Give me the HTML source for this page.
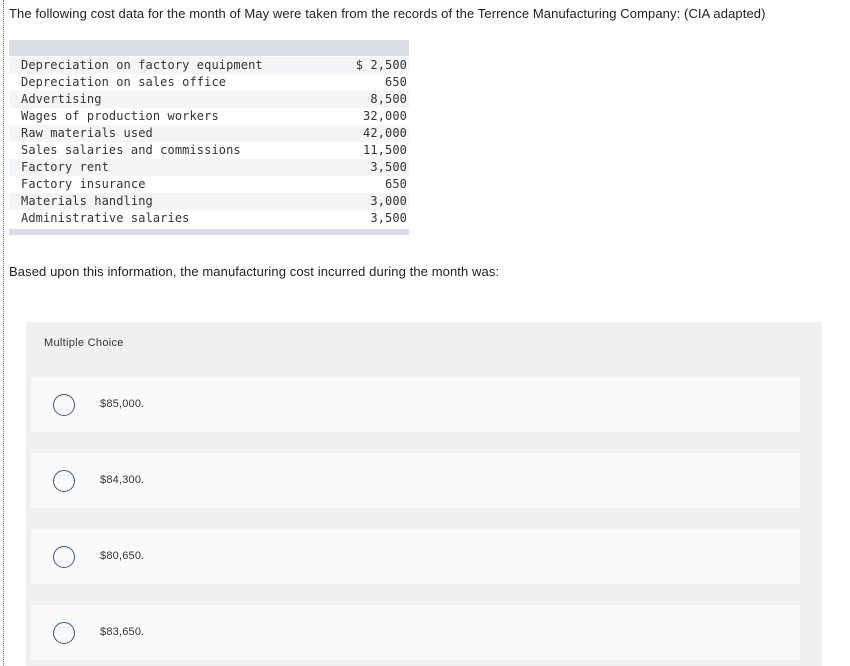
<!DOCTYPE html>
<html><head><style>
body{margin:0;width:850px;height:666px;background:#fff;position:relative;overflow:hidden;font-family:"Liberation Sans",Arial,sans-serif;color:#333}
.bl{position:absolute;left:3px;top:0;height:666px;border-left:1px dotted #6a7fa0}
.t{position:absolute;font-size:13px;color:#222;letter-spacing:0.1px}
.tbl{position:absolute;left:9px;top:40px;width:400px}
.hd{height:16px;background:#d9dde3}
.r{height:17px;position:relative;font-family:"DejaVu Sans Mono","Liberation Mono",monospace;font-size:12px;letter-spacing:0.1px;line-height:17px;color:#333}
.r:nth-child(odd){background:#f4f5f6}
.r span{position:absolute;left:12px}
.r b{position:absolute;right:2px;font-weight:normal}
.ft{height:6px;background:#d9dde3;margin-top:2px}
.mc{position:absolute;left:26px;top:322px;width:796px;height:344px;background:#f0f0f0}
.opt{position:absolute;left:5px;width:769px;height:55px;background:#fafafa}
.c{position:absolute;left:22px;top:17px;width:20px;height:20px;border:1.5px solid #3d5a7a;border-radius:50%}
.o{position:absolute;left:69px;top:21px;font-size:11px;color:#333;letter-spacing:0.2px}
</style></head><body>
<div class="bl"></div>
<div class="t" style="left:9px;top:6px">The following cost data for the month of May were taken from the records of the Terrence Manufacturing Company: (CIA adapted)</div>
<div class="tbl">
<div class="hd"></div>
<div style="height:1px"></div>
<div>
<div class="r"><span>Depreciation on factory equipment</span><b>$ 2,500</b></div>
<div class="r"><span>Depreciation on sales office</span><b>650</b></div>
<div class="r"><span>Advertising</span><b>8,500</b></div>
<div class="r"><span>Wages of production workers</span><b>32,000</b></div>
<div class="r"><span>Raw materials used</span><b>42,000</b></div>
<div class="r"><span>Sales salaries and commissions</span><b>11,500</b></div>
<div class="r"><span>Factory rent</span><b>3,500</b></div>
<div class="r"><span>Factory insurance</span><b>650</b></div>
<div class="r"><span>Materials handling</span><b>3,000</b></div>
<div class="r"><span>Administrative salaries</span><b>3,500</b></div>
</div>
<div class="ft"></div>
</div>
<div class="t" style="left:9px;top:264px">Based upon this information, the manufacturing cost incurred during the month was:</div>
<div class="mc">
<div style="position:absolute;left:18px;top:15px;font-size:11px;color:#333;letter-spacing:0.3px">Multiple Choice</div>
<div class="opt" style="top:55px"><div class="c"></div><div class="o">$85,000.</div></div>
<div class="opt" style="top:131px"><div class="c"></div><div class="o">$84,300.</div></div>
<div class="opt" style="top:207px"><div class="c"></div><div class="o">$80,650.</div></div>
<div class="opt" style="top:283px"><div class="c"></div><div class="o">$83,650.</div></div>
</div>
</body></html>
